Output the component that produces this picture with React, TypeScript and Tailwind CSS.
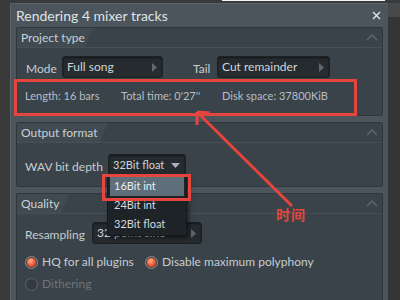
import React from 'react';

const RED = '#e5453c';

const Tri: React.FC<{ down?: boolean }> = ({ down }) =>
  down ? (
    <svg width="9" height="5" viewBox="0 0 9 5" className="shrink-0">
      <path d="M0 0 L9 0 L4.5 5 Z" fill="#a9b2b8" />
    </svg>
  ) : (
    <svg width="5" height="9" viewBox="0 0 5 9" className="shrink-0">
      <path d="M0 0 L5 4.5 L0 9 Z" fill="#5f686e" />
    </svg>
  );

const Dropdown: React.FC<{ label: string; w: string; down?: boolean; small?: boolean }> = ({ label, w, down, small }) => (
  <div
    className={`flex h-[22px] items-center justify-between rounded-[3px] border border-[#1c2124] bg-[#252b2f] pl-[4px] pr-[5px] shadow-[inset_0_1px_2px_rgba(0,0,0,0.5)] ${w}`}
  >
    <span className={`${small ? 'text-[11px]' : 'text-[12px]'} text-[#d0d6da]`}>{label}</span>
    <Tri down={down} />
  </div>
);

const Section: React.FC<{ title: string; tabW: string; className?: string; children: React.ReactNode }> = ({
  title,
  tabW,
  className,
  children,
}) => (
  <div className={`rounded-[2px] border border-[#30373c] bg-[#3a4349] ${className ?? ''}`}>
    <div className="flex h-[20px] items-stretch justify-between border-b border-[#465057]">
      <div
        className={`flex items-center bg-[#414a51] pl-[4px] text-[12px] text-[#c9d1d6] [clip-path:polygon(0_0,100%_0,calc(100%-8px)_100%,0_100%)] ${tabW}`}
      >
        {title}
      </div>
      <svg width="12" height="7" viewBox="0 0 12 7" className="mr-[4px] mt-[6px]">
        <path d="M1 6 L6 1 L11 6" stroke="#5b656c" strokeWidth="1.5" fill="none" />
      </svg>
    </div>
    {children}
  </div>
);

const Radio: React.FC<{ on?: boolean }> = ({ on }) => (
  <div
    className={`flex h-[13px] w-[13px] shrink-0 items-center justify-center rounded-full border ${
      on ? 'border-[#8a9296] bg-[#5a3a33]' : 'border-[#5c656b] bg-[#343b40]'
    }`}
  >
    {on && <div className="h-[9px] w-[9px] rounded-full bg-[radial-gradient(circle_at_40%_35%,#ffb08a,#e8583a_55%,#b83a22)]" />}
  </div>
);

export default function App() {
  return (
    <div
      className="relative flex h-[300px] w-[400px] flex-col overflow-hidden bg-[#393a3b]"
      style={{ fontFamily: 'Lato, "Noto Sans", sans-serif' }}
    >
      {/* strip above dialog */}
      <div className="flex h-[3px] shrink-0">
        <div className="w-[222px]" />
        <div className="h-[1px] w-[163px] bg-[#f2f2f2]" />
      </div>

      <div className="flex flex-1">
        <div className="w-[10px] shrink-0 bg-[#3a3a3b]" />

        {/* dialog */}
        <div className="flex w-[378px] shrink-0 flex-col border-l border-t border-[#5a636a] bg-[#4c555c] pl-[5px] pr-[5px]">
          <div className="flex h-[23px] shrink-0 items-center justify-between">
            <span className="text-[14px] text-[#dde3e6]">Rendering 4 mixer tracks</span>
            <svg width="9" height="9" viewBox="0 0 9 9" className="mr-[2px]">
              <path d="M1 1 L8 8 M8 1 L1 8" stroke="#dfe7ed" strokeWidth="1.4" />
            </svg>
          </div>

          <Section title="Project type" tabW="w-[76px]" className="h-[89px]">
            <div className="flex h-[30px] items-end pl-[9px]">
              <span className="w-[36px] text-[12px] text-[#c5cdd2]">Mode</span>
              <Dropdown label="Full song" w="w-[101px]" />
              <span className="ml-[30px] w-[24px] text-[12px] text-[#c5cdd2]">Tail</span>
              <Dropdown label="Cut remainder" w="w-[113px]" />
            </div>
            <div className="flex h-[37px] items-center pl-[8px] text-[11px] text-[#b4bec5]">
              <span className="w-[96px]">Length: 16 bars</span>
              <span className="w-[101px]">Total time: 0'27''</span>
              <span>Disk space: 37800KiB</span>
            </div>
          </Section>

          <Section title="Output format" tabW="w-[91px]" className="mt-[6px] h-[65px]">
            <div className="flex h-[33px] items-end pl-[8px]">
              <span className="w-[83px] text-[12px] text-[#c5cdd2]">WAV bit depth</span>
              <Dropdown label="32Bit float" w="w-[78px]" down small />
            </div>
          </Section>

          <Section title="Quality" tabW="w-[52px]" className="mt-[6px] flex-1 rounded-b-none border-b-0">
            <div className="flex h-[30px] items-end pl-[8px]">
              <span className="w-[67px] text-[12px] text-[#c5cdd2]">Resampling</span>
              <Dropdown label="32 point sinc" w="w-[110px]" />
            </div>
            <div className="mt-[9px] flex items-center pl-[8px] text-[12px] text-[#c5cdd2]">
              <Radio on />
              <span className="ml-[4px] w-[103px]">HQ for all plugins</span>
              <Radio on />
              <span className="ml-[4px]">Disable maximum polyphony</span>
            </div>
            <div className="mt-[4px] flex items-center pl-[8px] text-[12px] text-[#6b757b]">
              <Radio />
              <span className="ml-[4px]">Dithering</span>
            </div>
          </Section>
        </div>

        <div className="flex flex-1 flex-col bg-[#343536]">
          <div className="h-[14px] bg-[#48494a]" />
        </div>
      </div>

      {/* open dropdown menu */}
      <div className="absolute left-[107px] top-[175px] flex h-[61px] w-[80px] flex-col border border-[#15191c] bg-[#1e2327] px-[2px] pt-[1px] text-[11px] text-[#d3d9dc] shadow-[2px_2px_4px_rgba(0,0,0,0.5)]">
        <div className="flex h-[19px] items-center bg-[#5e6f79] pl-[4px] text-[#e8eef1]">16Bit int</div>
        <div className="flex h-[19px] items-center pl-[4px]">24Bit int</div>
        <div className="flex h-[19px] items-center pl-[4px]">32Bit float</div>
      </div>

      {/* annotations */}
      <div className="absolute left-[14px] top-[79px] h-[37px] w-[343px] border-[3px] border-[#e5453c]" />
      <div className="absolute left-[102px] top-[174px] h-[27px] w-[89px] border-[3px] border-[#e5453c]" />
      <svg className="absolute left-0 top-0" width="400" height="300" viewBox="0 0 400 300">
        <line x1="199" y1="114" x2="292" y2="206" stroke={RED} strokeWidth="3" />
        <path d="M197 112 L197 125 M197 112 L210 113" stroke={RED} strokeWidth="3" fill="none" />
      </svg>
      <span
        className="absolute left-[276px] top-[204px] text-[14px] font-bold tracking-[1px]"
        style={{ color: RED, fontFamily: '"Noto Sans CJK SC", sans-serif' }}
      >
        时间
      </span>
    </div>
  );
}
